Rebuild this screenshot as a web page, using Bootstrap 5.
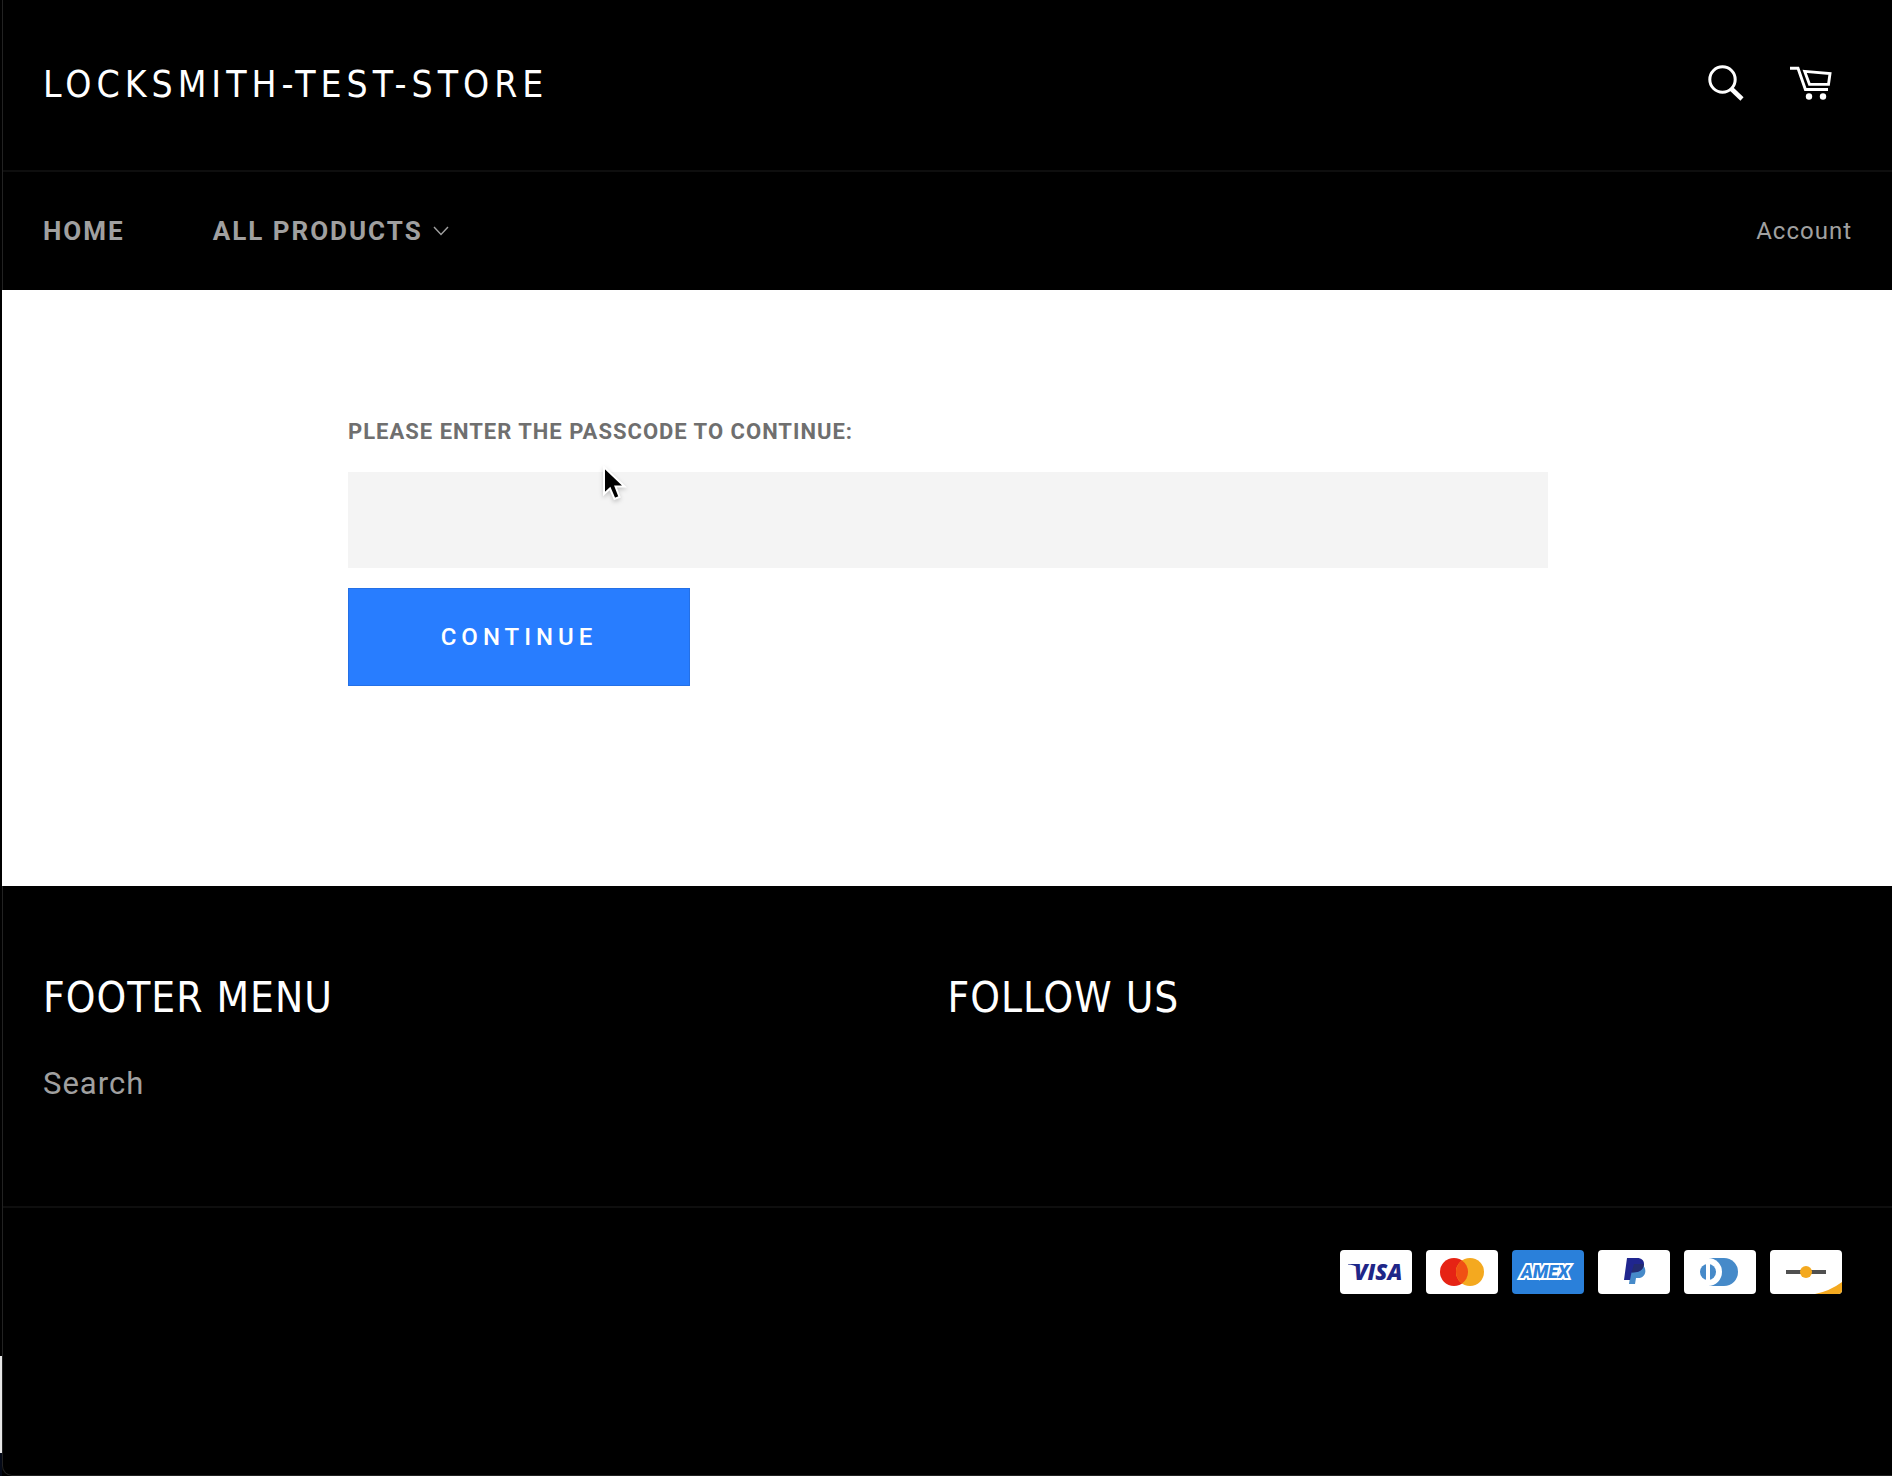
<!DOCTYPE html>
<html lang="en">
<head>
<meta charset="utf-8">
<meta name="viewport" content="width=device-width, initial-scale=1">
<title>locksmith-test-store</title>
<link href="https://cdn.jsdelivr.net/npm/bootstrap@5.3.0/dist/css/bootstrap.min.css" rel="stylesheet">
<style>
body { background: #000; color: #666; font-family: Roboto, "Liberation Sans", sans-serif; }
a { color: #a0a0a0; text-decoration: none; }
a:hover { color: #fff; }
/* desktop edge showing beside the window */
.edge-rail { width: 2px; padding-bottom: 23px; background: linear-gradient(to top, #050a18 23px, #000 23px); }
.edge-rail span { height: 97px; background: #e6e6e6; }
.window-dark { background: #000; border-left: 1px solid #222; }
.rule-below { border-bottom: 2px solid #0e0e0e; }
.side-pad { padding-left: 40px; padding-right: 40px; }
.display-face { font-family: "DejaVu Sans Condensed", "DejaVu Sans", sans-serif; color: #fff; text-transform: uppercase; font-weight: 400; }
.store-name { font-size: 37px; line-height: 48px; letter-spacing: 5px; }
.store-name:hover { color: #fff; }
.masthead { height: 172px; }
.header-tools { padding-right: 20px; padding-bottom: 4px; gap: 46px; }
.menu-row { height: 118px; }
.menu-list { gap: 88px; }
.menu-link { font-size: 26px; line-height: 32px; font-weight: 700; letter-spacing: 2px; text-transform: uppercase; gap: 10px; }
.account-link { font-size: 24px; line-height: 32px; letter-spacing: 1px; }
.icon-btn { background: none; border: 0; padding: 0; line-height: 0; color: #fff; }
.content-area { background: #fff; padding: 130px 24px 200px 26px; }
.lock-form { max-width: 1200px; }
.lock-label { font-size: 22px; line-height: 24px; font-weight: 700; letter-spacing: 1px; color: #6f6f6f; text-transform: uppercase; margin-bottom: 28px; }
.lock-input { height: 96px; background: #f4f4f4; border: 0; border-radius: 0; font-size: 24px; }
.lock-btn { margin-top: 20px; height: 98px; min-width: 342px; border-radius: 0; font-size: 24px; font-weight: 500; letter-spacing: 5px; text-transform: uppercase; --bs-btn-bg: #287dff; --bs-btn-border-color: #2470e6; --bs-btn-hover-bg: #0f6dff; }
.footer-top { padding-top: 84px; padding-bottom: 100px; }
.foot-title { font-size: 42px; line-height: 56px; letter-spacing: 1px; margin: 0 0 36px; }
.foot-link { font-size: 31px; line-height: 44px; letter-spacing: 1px; }
.pay-row { padding: 42px 50px 0 0; gap: 14px; }
.window-foot { border-bottom: 1px solid #222; border-bottom-left-radius: 10px; }
.pointer { position: absolute; left: 254px; top: 46px; pointer-events: none; filter: drop-shadow(0 2px 2px rgba(0, 0, 0, .2)); }
</style>
</head>
<body>
<div class="d-flex min-vh-100">
  <div class="edge-rail d-flex flex-column justify-content-end flex-shrink-0" aria-hidden="true"><span></span></div>
  <div class="flex-grow-1 d-flex flex-column">
    <header class="window-dark">
      <div class="masthead side-pad rule-below d-flex align-items-center justify-content-between">
        <a class="store-name display-face" href="#">locksmith-test-store</a>
        <div class="header-tools d-flex align-items-center">
          <button class="icon-btn" type="button" aria-label="Search">
            <svg width="36" height="36" viewBox="0 0 36 36" fill="none" stroke="currentColor"><circle cx="14.500" cy="14.500" r="12.700" stroke-width="3"/><path d="M23 23.500 34 34" stroke-width="4.600"/></svg>
          </button>
          <a class="icon-btn" href="#" aria-label="Cart">
            <svg width="42" height="34" viewBox="0 0 42 34" fill="none" stroke="currentColor" stroke-width="2.900"><path d="M0 2.300H8L15.400 23.500H38"/><path d="M14.700 5.400 40 7.600 38.500 18.400H19.500Z"/><circle cx="19" cy="30.500" r="3.200" fill="currentColor" stroke="none"/><circle cx="33" cy="30.500" r="3.200" fill="currentColor" stroke="none"/></svg>
          </a>
        </div>
      </div>
      <nav class="menu-row side-pad d-flex align-items-center justify-content-between" aria-label="Main">
        <ul class="menu-list list-unstyled d-flex mb-0">
          <li><a class="menu-link d-flex" href="#">Home</a></li>
          <li><a class="menu-link d-flex align-items-center" href="#">All products
            <svg width="16" height="10" viewBox="0 0 16 10" fill="none" stroke="currentColor" stroke-width="1.400"><path d="M1 1 8 8.500 15 1"/></svg></a></li>
        </ul>
        <a class="account-link" href="#">Account</a>
      </nav>
    </header>
    <main class="content-area">
      <form class="lock-form mx-auto position-relative">
        <label class="lock-label d-block" for="passcode">Please enter the passcode to continue:</label>
        <input class="lock-input form-control" type="password" id="passcode">
        <button class="lock-btn btn btn-primary" type="button">Continue</button>
        <svg class="pointer" width="28" height="38" viewBox="0 0 28 38" aria-hidden="true"><path d="M2 1V28L8 22.500 12.500 33 17.500 31 13.500 20.500H22.500Z" fill="#000" stroke="#fff" stroke-width="2"/></svg>
      </form>
    </main>
    <footer class="window-dark window-foot flex-grow-1">
      <div class="footer-top side-pad rule-below">
        <div class="row gx-0">
          <div class="col-6">
            <h2 class="foot-title display-face">Footer menu</h2>
            <a class="foot-link" href="#">Search</a>
          </div>
          <div class="col-6"><h2 class="foot-title display-face">Follow us</h2></div>
        </div>
      </div>
      <div class="pay-row d-flex justify-content-end">
        <svg width="72" height="44" viewBox="0 0 72 44" role="img" aria-label="Visa"><rect width="72" height="44" rx="4" fill="#fff"/><path d="M8 14h9l1 4C16 16 12 14.500 8 14.500Z" fill="#1f2688"/><text x="14" y="30" font-family="Open Sans" font-size="22" font-weight="800" font-style="italic" fill="#1f2688">VISA</text></svg>
        <svg width="72" height="44" viewBox="0 0 72 44" role="img" aria-label="Mastercard"><rect width="72" height="44" rx="4" fill="#fff"/><circle cx="28" cy="22" r="14" fill="#e62314"/><circle cx="44" cy="22" r="14" fill="#f4a91f"/><path d="M36 10.500a14 14 0 0 1 0 23 14 14 0 0 1 0-23Z" fill="#f05014"/></svg>
        <svg width="72" height="44" viewBox="0 0 72 44" role="img" aria-label="American Express"><rect width="72" height="44" rx="4" fill="#2a80da"/><text x="9" y="28" font-family="Roboto" font-size="18" font-weight="900" font-style="italic" fill="#2a80da" stroke="#fff" stroke-width="4" paint-order="stroke">AMEX</text></svg>
        <svg width="72" height="44" viewBox="0 0 72 44" role="img" aria-label="PayPal"><rect width="72" height="44" rx="4" fill="#fff"/><path d="M44 15C49 17 49 28 40 28H38L37 34H31L33 20Z" fill="#468ac9"/><path d="M29 8H39C45 8 47 12 45.500 16.500 44 21 40 22.500 33.500 22.500L32 30H26Z" fill="#20268f"/><path d="M36 14H46C45.500 20 41 22.500 33.500 22.500Z" fill="#232b70"/></svg>
        <svg width="72" height="44" viewBox="0 0 72 44" role="img" aria-label="Diners Club"><rect width="72" height="44" rx="4" fill="#fff"/><path d="M25 8H40a14 14 0 0 1 0 28H25Z" fill="#468ac9"/><circle cx="24" cy="22" r="14" fill="#fff"/><circle cx="24" cy="22" r="8" fill="#468ac9"/><path d="M22 12h4v20h-4Z" fill="#fff"/></svg>
        <svg width="72" height="44" viewBox="0 0 72 44" role="img" aria-label="Discover"><rect width="72" height="44" rx="4" fill="#fff"/><path d="M16 22H56" stroke="#505050" stroke-width="4"/><circle cx="36" cy="22" r="6" fill="#f4a91f"/><path d="M45 44Q60 41 72 32V40a4 4 0 0 1-4 4Z" fill="#f4a91f"/></svg>
      </div>
    </footer>
  </div>
</div>
<script src="https://cdn.jsdelivr.net/npm/bootstrap@5.3.0/dist/js/bootstrap.bundle.min.js"></script>
</body>
</html>
